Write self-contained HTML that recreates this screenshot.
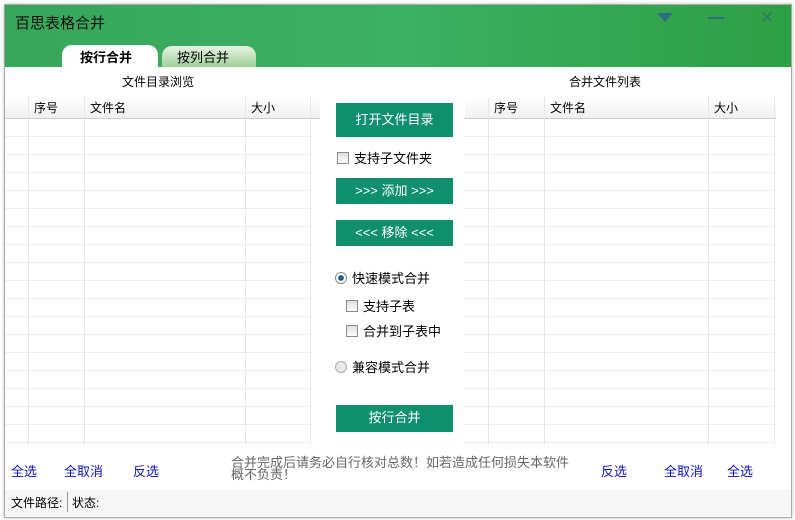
<!DOCTYPE html>
<html><head><meta charset="utf-8"><style>
body{margin:0;width:795px;height:520px;background:#fff;font-family:"Liberation Sans","Noto Sans CJK SC",sans-serif;font-size:12px;position:relative;overflow:hidden}
.a{position:absolute}
.win{left:4px;top:4px;width:786px;height:512px;border:1px solid #a9a9a9;box-shadow:0 0 3px #bbb;background:#fff}
.hdr{left:5px;top:5px;width:786px;height:62px;background:linear-gradient(90deg,#37a65a,#3cb064 50%,#2e9f44)}
.grid{background-image:linear-gradient(transparent 17px,#ececec 17px);background-size:100% 18px}
.btn{background:#0f8f6b;color:#fff;text-align:center;font-size:13px}
.cb{width:10px;height:10px;border:1px solid #8a8a8a;background:linear-gradient(#ddd,#fff)}
.th{background:linear-gradient(#fff,#f0f0f0);border-bottom:1px solid #ccc;height:21px}
.vl{width:1px;background:#e6e6e6}
.lk{color:#1010c0;font-size:13px}
</style></head><body>
<div class="a win"></div>
<div class="a hdr"></div>
<div class="a" style="left:15px;top:12px;font-size:15px;color:#111">百思表格合并</div>
<div class="a" style="left:658px;top:14px;width:0;height:0;border-left:7px solid transparent;border-right:7px solid transparent;border-top:8px solid #2f6d86"></div>
<div class="a" style="left:658px;top:13px;width:14px;height:2px;background:#2f6d86"></div>
<div class="a" style="left:708px;top:17px;width:16px;height:2px;background:#2f6d86"></div>
<div class="a" style="left:760px;top:8px;color:#2f7a60;font-size:17px">✕</div>
<div class="a" style="left:62px;top:45px;width:96px;height:22px;background:#fff;border-radius:10px 10px 0 0"></div>
<div class="a" style="left:80px;top:47px;font-size:13px;font-weight:bold">按行合并</div>
<div class="a" style="left:162px;top:46px;width:94px;height:21px;background:linear-gradient(#e8f3e3,#9fcf9a);border-radius:10px 10px 0 0"></div>
<div class="a" style="left:177px;top:47px;font-size:13px">按列合并</div>
<div class="a" style="left:122px;top:73px">文件目录浏览</div>
<div class="a" style="left:569px;top:73px">合并文件列表</div>
<div class="a th" style="left:5px;top:97px;width:318px"></div>
<div class="a grid" style="left:5px;top:119px;width:306px;height:326px"></div>
<div class="a vl" style="left:28px;top:97px;height:348px"></div>
<div class="a vl" style="left:84px;top:97px;height:348px"></div>
<div class="a vl" style="left:245px;top:97px;height:348px"></div>
<div class="a vl" style="left:310px;top:97px;height:348px"></div>
<div class="a" style="left:34px;top:99px;font-size:12px">序号</div>
<div class="a" style="left:90px;top:99px;font-size:12px">文件名</div>
<div class="a" style="left:251px;top:99px;font-size:12px">大小</div>
<div class="a th" style="left:465px;top:97px;width:311px"></div>
<div class="a grid" style="left:465px;top:119px;width:310px;height:326px"></div>
<div class="a vl" style="left:488px;top:97px;height:348px"></div>
<div class="a vl" style="left:544px;top:97px;height:348px"></div>
<div class="a vl" style="left:708px;top:97px;height:348px"></div>
<div class="a vl" style="left:774px;top:97px;height:348px"></div>
<div class="a" style="left:494px;top:99px;font-size:12px">序号</div>
<div class="a" style="left:550px;top:99px;font-size:12px">文件名</div>
<div class="a" style="left:714px;top:99px;font-size:12px">大小</div>
<div class="a" style="left:320px;top:97px;width:145px;height:350px;background:#fff"></div>
<div class="a btn" style="left:336px;top:103px;width:117px;height:34px;line-height:33px">打开文件目录</div>
<div class="a cb" style="left:337px;top:152px"></div>
<div class="a" style="left:354px;top:148px;font-size:13px">支持子文件夹</div>
<div class="a btn" style="left:336px;top:178px;width:117px;height:26px;line-height:25px">&gt;&gt;&gt; 添加 &gt;&gt;&gt;</div>
<div class="a btn" style="left:336px;top:220px;width:117px;height:26px;line-height:25px">&lt;&lt;&lt; 移除 &lt;&lt;&lt;</div>
<div class="a" style="left:335px;top:272px;width:10px;height:10px;border-radius:50%;border:1px solid #888;background:radial-gradient(#1a5a8a 35%,#fff 45%)"></div>
<div class="a" style="left:352px;top:268px;font-size:13px">快速模式合并</div>
<div class="a cb" style="left:346px;top:300px"></div>
<div class="a" style="left:363px;top:296px;font-size:13px">支持子表</div>
<div class="a cb" style="left:346px;top:325px"></div>
<div class="a" style="left:363px;top:321px;font-size:13px">合并到子表中</div>
<div class="a" style="left:335px;top:361px;width:10px;height:10px;border-radius:50%;border:1px solid #aaa;background:#e8e8e8"></div>
<div class="a" style="left:352px;top:357px;font-size:13px">兼容模式合并</div>
<div class="a btn" style="left:336px;top:405px;width:117px;height:27px;line-height:26px">按行合并</div>
<div class="a lk" style="left:11px;top:461px">全选</div>
<div class="a lk" style="left:64px;top:461px">全取消</div>
<div class="a lk" style="left:133px;top:461px">反选</div>
<div class="a" style="left:231px;top:457px;color:#666;line-height:12px;font-size:13px">合并完成后请务必自行核对总数！如若造成任何损失本软件<br>概不负责！</div>
<div class="a lk" style="left:601px;top:461px">反选</div>
<div class="a lk" style="left:664px;top:461px">全取消</div>
<div class="a lk" style="left:727px;top:461px">全选</div>
<div class="a" style="left:5px;top:490px;width:786px;height:26px;background:#f6f6f6"></div>
<div class="a" style="left:11px;top:494px">文件路径:</div>
<div class="a" style="left:67px;top:492px;width:1px;height:20px;background:#999"></div>
<div class="a" style="left:72px;top:494px">状态:</div>
</body></html>
